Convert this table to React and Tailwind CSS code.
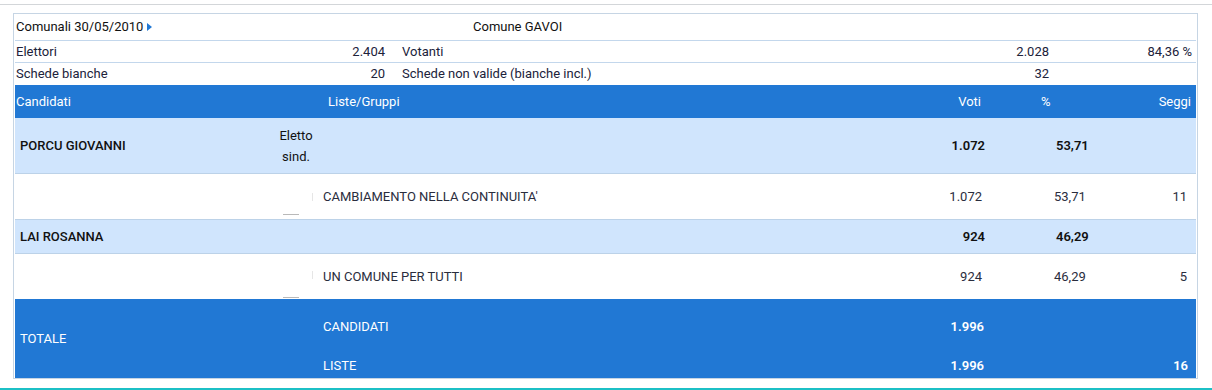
export default function App() {
  const font = { fontFamily: "Roboto, 'Liberation Sans', sans-serif" };

  return (
    <div className="w-[1212px] h-[390px] bg-white text-[13px] text-[#20223a] overflow-hidden" style={font}>
      <div className="pt-[4px]">
        <div className="border-t border-[#d3d6d9]" />
      </div>
      <div className="ml-[13px] mt-[8px] w-[1185px] border border-[#c6d5e4] pl-px pr-[1px]">
        {/* riepilogo */}
        <div className="flex h-[27px] items-center border-b border-[#c3d7ec] text-[#111]">
          <div className="w-[458px] pl-[1px] flex items-center gap-[4px]">
            Comunali 30/05/2010
            <span className="w-0 h-0 border-y-[4px] border-y-transparent border-l-[5px] border-l-[#2178d4]" />
          </div>
          <div>Comune GAVOI</div>
        </div>
        <div className="flex h-[22px] items-center border-b border-[#c3d7ec]">
          <div className="w-[310px] pl-[1px]">Elettori</div>
          <div className="w-[60px] text-right">2.404</div>
          <div className="w-[17px]" />
          <div className="w-[647px] flex justify-between">
            <span>Votanti</span>
            <span>2.028</span>
          </div>
          <div className="flex-1 text-right pr-[4px]">84,36 %</div>
        </div>
        <div className="flex h-[22px] items-center">
          <div className="w-[310px] pl-[1px]">Schede bianche</div>
          <div className="w-[60px] text-right">20</div>
          <div className="w-[17px]" />
          <div className="w-[647px] flex justify-between">
            <span>Schede non valide (bianche incl.)</span>
            <span>32</span>
          </div>
          <div className="flex-1" />
        </div>

        {/* tabella */}
        <div className="flex h-[33px] items-center bg-[#2178d4] text-white">
          <div className="w-[313px] pl-[1px]">Candidati</div>
          <div className="flex-1">Liste/Gruppi</div>
          <div className="w-[55px] text-right pr-[4px]">Voti</div>
          <div className="w-[116px] pl-[56px]">%</div>
          <div className="w-[95px] text-right pr-[5px]">Seggi</div>
        </div>

        <div className="flex h-[56px] items-center bg-[#d0e5fd] border-b border-[#bcd2e8] text-[#111]">
          <div className="w-[260px] pl-[5px] font-medium">PORCU GIOVANNI</div>
          <div className="w-[42px] text-center leading-[21px]">
            Eletto
            <br />
            sind.
          </div>
          <div className="flex-1" />
          <div className="w-[55px] text-right pr-0 font-semibold">1.072</div>
          <div className="w-[116px] pl-[71px] font-semibold">53,71</div>
          <div className="w-[95px]" />
        </div>

        <div className="flex h-[46px] items-center border-b border-[#bcd2e8] text-[#2a2d3d]">
          <div className="w-[260px]" />
          <div className="w-[42px] h-full relative">
            <span className="absolute right-[4px] top-[19px] w-px h-[8px] bg-[#e6e6e6]" />
            <span className="absolute left-[8px] bottom-[4px] w-[16px] h-px bg-[#b9b9b9]" />
          </div>
          <div className="flex-1 pl-[6px]">CAMBIAMENTO NELLA CONTINUITA'</div>
          <div className="w-[55px] text-right pr-[3px]">1.072</div>
          <div className="w-[116px] pl-[69px]">53,71</div>
          <div className="w-[95px] text-right pr-[9px]">11</div>
        </div>

        <div className="flex h-[34px] items-center bg-[#d0e5fd] border-b border-[#bcd2e8] text-[#111]">
          <div className="w-[260px] pl-[5px] font-medium">LAI ROSANNA</div>
          <div className="w-[42px]" />
          <div className="flex-1" />
          <div className="w-[55px] text-right pr-0 font-semibold">924</div>
          <div className="w-[116px] pl-[71px] font-semibold">46,29</div>
          <div className="w-[95px]" />
        </div>

        <div className="flex h-[45px] items-center text-[#2a2d3d]">
          <div className="w-[260px]" />
          <div className="w-[42px] h-full relative">
            <span className="absolute right-[4px] top-[17px] w-px h-[8px] bg-[#e6e6e6]" />
            <span className="absolute left-[8px] bottom-[1px] w-[16px] h-px bg-[#b9b9b9]" />
          </div>
          <div className="flex-1 pl-[6px]">UN COMUNE PER TUTTI</div>
          <div className="w-[55px] text-right pr-[3px]">924</div>
          <div className="w-[116px] pl-[69px]">46,29</div>
          <div className="w-[95px] text-right pr-[9px]">5</div>
        </div>

        <div className="flex h-[79px] bg-[#2178d4] text-white">
          <div className="w-[302px] pl-[5px] flex items-center">TOTALE</div>
          <div className="flex-1 flex flex-col justify-between pl-[6px] pt-[18px] pb-[3px]">
            <span>CANDIDATI</span>
            <span>LISTE</span>
          </div>
          <div className="w-[55px] flex flex-col justify-between items-end pr-[1px] pt-[18px] pb-[3px] font-semibold">
            <span>1.996</span>
            <span>1.996</span>
          </div>
          <div className="w-[116px]" />
          <div className="w-[95px] flex flex-col justify-end items-end pr-[8px] pb-[3px] font-semibold">
            <span>16</span>
          </div>
        </div>
      </div>
      <div className="mt-[9px] h-[2px] bg-[#1cc0c6]" />
    </div>
  );
}
